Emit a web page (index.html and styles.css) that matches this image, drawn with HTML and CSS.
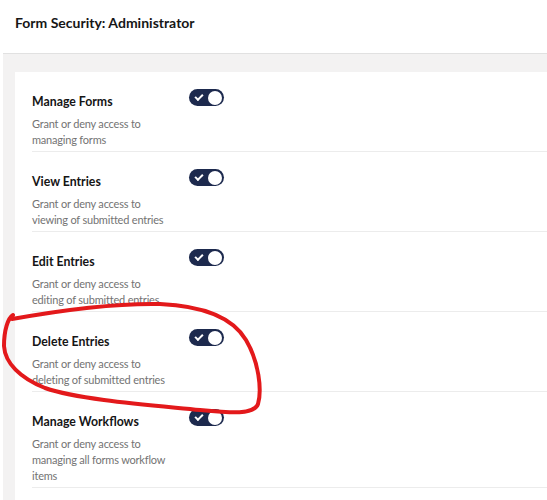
FILE: index.html
```html
<!DOCTYPE html>
<html>
<head>
<meta charset="utf-8">
<link rel="stylesheet" href="styles.css">
</head>
<body>
<div class="page">
  <header class="header">
    <h1 class="title">Form Security: Administrator</h1>
  </header>
  <main class="panel">
    <section class="card">
      <div class="row">
        <div class="text">
          <div class="name">Manage Forms</div>
          <div class="desc">Grant or deny access to managing forms</div>
        </div>
        <span class="toggle"><span class="check"></span><span class="knob"></span></span>
      </div>
      <div class="row">
        <div class="text">
          <div class="name">View Entries</div>
          <div class="desc">Grant or deny access to viewing of submitted entries</div>
        </div>
        <span class="toggle"><span class="check"></span><span class="knob"></span></span>
      </div>
      <div class="row">
        <div class="text">
          <div class="name">Edit Entries</div>
          <div class="desc">Grant or deny access to editing of submitted entries</div>
        </div>
        <span class="toggle"><span class="check"></span><span class="knob"></span></span>
      </div>
      <div class="row">
        <div class="text">
          <div class="name">Delete Entries</div>
          <div class="desc">Grant or deny access to deleting of submitted entries</div>
        </div>
        <span class="toggle"><span class="check"></span><span class="knob"></span></span>
      </div>
      <div class="row">
        <div class="text">
          <div class="name">Manage Workflows</div>
          <div class="desc">Grant or deny access to managing all forms workflow items</div>
        </div>
        <span class="toggle"><span class="check"></span><span class="knob"></span></span>
      </div>
    </section>
  </main>
  <svg class="scribble" width="547" height="500" viewBox="0 0 547 500" aria-hidden="true">
    <path d="M 13 315 C 8 318, 4 330, 4 346 C 5 363, 20 378, 45 388 C 80 400, 150 405, 200 410 C 232 413, 254 415, 258 404 C 262 390, 259 362, 246 340 C 233 318, 205 306, 160 304 C 112 303, 62 310, 12 319"
      fill="none" stroke="#e3191b" stroke-width="4" stroke-linecap="round" stroke-linejoin="round"/>
  </svg>
</div>
</body>
</html>
```
FILE: styles.css
```css
* { box-sizing: border-box; }
html, body { margin: 0; padding: 0; background: #fff; }
body { font-family: Lato, "Open Sans", "Liberation Sans", sans-serif; color: #161616; }
.page { position: relative; width: 547px; height: 500px; overflow: hidden; }
.header { height: 53px; display: flex; align-items: flex-start; padding: 14px 0 0 15px; }
.title { margin: 0; font-size: 14px; font-weight: 700; line-height: 17px; color: #161616; }
.panel { margin-left: 3px; background: #f3f2f2; border-top: 1px solid #e1e1e1; padding: 18px 0 0 12px; height: 447px; }
.card { background: #fff; padding-left: 17px; height: 100%; }
.row { display: flex; align-items: flex-start; gap: 17px; padding: 22px 0 3px; border-bottom: 1px solid #ececec; }
.text { width: 140px; flex: none; }
.name { font-size: 12.3px; font-weight: 700; line-height: 16px; margin-bottom: 6px; color: #151515; }
.desc { font-size: 11px; letter-spacing: -0.2px; line-height: 16px; color: #737373; }
.toggle { position: relative; flex: none; width: 35px; height: 17px; border-radius: 9px; background: #1d2a4e; margin-top: -5px; }
.knob { position: absolute; right: 2px; top: 1.5px; width: 14px; height: 14px; border-radius: 50%; background: #fff; }
.check { position: absolute; left: 6px; top: 5px; width: 8px; height: 5px; border-left: 2px solid #fff; border-bottom: 2px solid #fff; transform: rotate(-45deg); transform-origin: center; }
.scribble { position: absolute; left: 0; top: 0; pointer-events: none; }
```
